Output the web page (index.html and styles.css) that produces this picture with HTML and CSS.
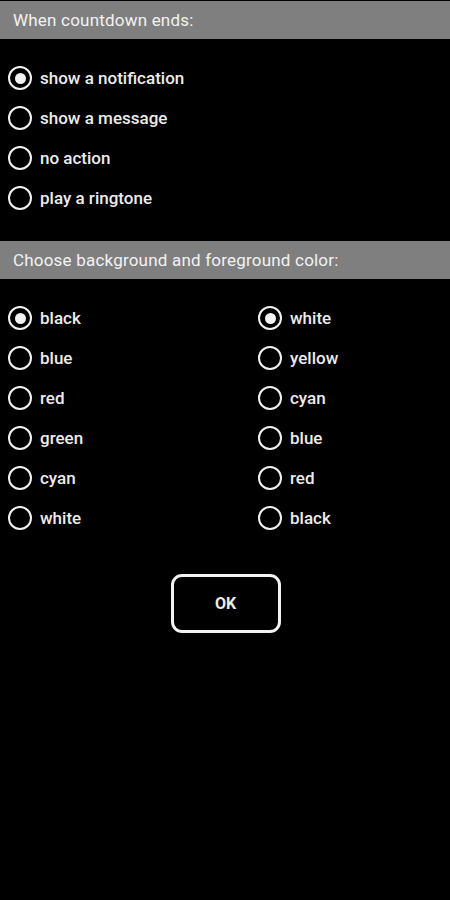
FILE: index.html
```html
<!DOCTYPE html>
<html lang="en">
<head>
    <meta charset="UTF-8">
    <title>Countdown settings</title>
    <meta name="viewport" content="width=device-width, initial-scale=1.0">
    <link rel="stylesheet" href="styles.css">
</head>
<body>
<div class="section-title">When countdown ends:</div>
<div class="options">
    <label class="radio"><span class="dot checked"></span>show a notification</label>
    <label class="radio"><span class="dot"></span>show a message</label>
    <label class="radio"><span class="dot"></span>no action</label>
    <label class="radio"><span class="dot"></span>play a ringtone</label>
</div>

<div class="section-title">Choose background and foreground color:</div>
<div class="colors">
    <!--左边背景色，右边前景色-->
    <label class="radio"><span class="dot checked"></span>black</label>
    <label class="radio"><span class="dot checked"></span>white</label>
    <label class="radio"><span class="dot"></span>blue</label>
    <label class="radio"><span class="dot"></span>yellow</label>
    <label class="radio"><span class="dot"></span>red</label>
    <label class="radio"><span class="dot"></span>cyan</label>
    <label class="radio"><span class="dot"></span>green</label>
    <label class="radio"><span class="dot"></span>blue</label>
    <label class="radio"><span class="dot"></span>cyan</label>
    <label class="radio"><span class="dot"></span>red</label>
    <label class="radio"><span class="dot"></span>white</label>
    <label class="radio"><span class="dot"></span>black</label>
</div>

<div class="actions">
    <button class="ok">OK</button>
</div>
</body>
</html>
```

FILE: styles.css
```css
* {
    margin: 0;
    padding: 0;
    box-sizing: border-box;
}

html, body {
    background: #000;
}

body {
    width: 450px;
    height: 900px;
    padding-top: 1px;
    font-family: Roboto, "Liberation Sans", sans-serif;
    color: #ececec;
}

.section-title {
    height: 38px;
    line-height: 38px;
    padding-left: 13px;
    background: #7f7f7f;
    font-size: 17px;
    letter-spacing: 0.2px;
    color: #f2f2f2;
}

.options {
    padding: 19px 0 23px 8px;
}

.colors {
    display: grid;
    grid-template-columns: 250px 1fr;
    padding: 19px 0 0 8px;
}

.radio {
    display: flex;
    align-items: center;
    height: 40px;
    font-size: 17px;
    font-weight: 500;
}

.dot {
    width: 24px;
    height: 24px;
    margin-right: 8px;
    border: 2.5px solid #f2f2f2;
    border-radius: 50%;
    display: flex;
    align-items: center;
    justify-content: center;
}

.dot.checked::after {
    content: "";
    width: 11px;
    height: 11px;
    border-radius: 50%;
    background: #f2f2f2;
}

.actions {
    display: flex;
    justify-content: center;
    padding-top: 36px;
}

.ok {
    width: 110px;
    height: 59px;
    margin-left: 1px;
    background: #000;
    border: 3px solid #f2f2f2;
    border-radius: 11px;
    color: #ececec;
    font-family: Roboto, "Liberation Sans", sans-serif;
    font-size: 16px;
    font-weight: bold;
}
```
